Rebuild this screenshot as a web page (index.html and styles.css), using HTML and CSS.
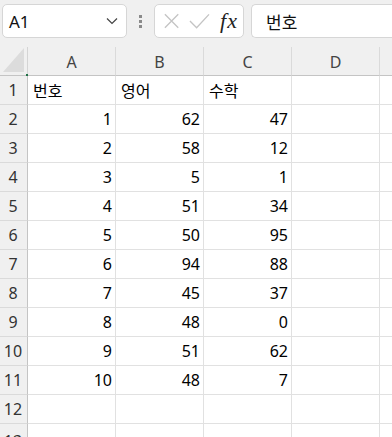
FILE: index.html
```html
<!DOCTYPE html>
<html lang="ko">
<head>
<meta charset="utf-8">
<link rel="stylesheet" href="styles.css">
</head>
<body>
<div class="app">
  <div class="toolbar">
    <div class="namebox">
      <span class="nb-text">A1</span>
      <svg class="chev" width="12" height="8" viewBox="0 0 12 8"><path d="M1 1.5 L6 6.5 L11 1.5" fill="none" stroke="#444" stroke-width="1.2"/></svg>
    </div>
    <div class="grip"><i></i><i></i><i></i></div>
    <div class="fxbox">
      <svg width="18" height="18" viewBox="0 0 18 18"><path d="M2 2 L16 16 M16 2 L2 16" stroke="#c4c4c4" stroke-width="1.4" fill="none"/></svg>
      <svg width="22" height="18" viewBox="0 0 22 18"><path d="M1 9 L8 16 L21 2" stroke="#c4c4c4" stroke-width="1.4" fill="none"/></svg>
      <span class="fx"><i>f</i><i class="x">x</i></span>
    </div>
    <div class="formula">번호</div>
  </div>
  <div class="sheet">
    <div class="ch corner"><span class="tri"></span><span class="dot"></span></div><div class="ch">A</div><div class="ch">B</div><div class="ch">C</div><div class="ch">D</div><div class="ch"></div>
    <div class="rh">1</div><div class="c">번호</div><div class="c">영어</div><div class="c">수학</div><div class="c"></div><div class="c"></div>
    <div class="rh">2</div><div class="c n">1</div><div class="c n">62</div><div class="c n">47</div><div class="c"></div><div class="c"></div>
    <div class="rh">3</div><div class="c n">2</div><div class="c n">58</div><div class="c n">12</div><div class="c"></div><div class="c"></div>
    <div class="rh">4</div><div class="c n">3</div><div class="c n">5</div><div class="c n">1</div><div class="c"></div><div class="c"></div>
    <div class="rh">5</div><div class="c n">4</div><div class="c n">51</div><div class="c n">34</div><div class="c"></div><div class="c"></div>
    <div class="rh">6</div><div class="c n">5</div><div class="c n">50</div><div class="c n">95</div><div class="c"></div><div class="c"></div>
    <div class="rh">7</div><div class="c n">6</div><div class="c n">94</div><div class="c n">88</div><div class="c"></div><div class="c"></div>
    <div class="rh">8</div><div class="c n">7</div><div class="c n">45</div><div class="c n">37</div><div class="c"></div><div class="c"></div>
    <div class="rh">9</div><div class="c n">8</div><div class="c n">48</div><div class="c n">0</div><div class="c"></div><div class="c"></div>
    <div class="rh">10</div><div class="c n">9</div><div class="c n">51</div><div class="c n">62</div><div class="c"></div><div class="c"></div>
    <div class="rh">11</div><div class="c n">10</div><div class="c n">48</div><div class="c n">7</div><div class="c"></div><div class="c"></div>
    <div class="rh">12</div><div class="c"></div><div class="c"></div><div class="c"></div><div class="c"></div><div class="c"></div>
    <div class="rh r13">13</div><div class="c"></div><div class="c"></div><div class="c"></div><div class="c"></div><div class="c"></div>
  </div>
</div>
</body>
</html>
```
FILE: styles.css
```css
html, body {
  margin: 0;
  padding: 0;
  background: #f0f0f0;
  overflow: hidden;
}
.app {
  width: 392px;
  height: 437px;
  overflow: hidden;
  font-family: "Noto Sans", "Noto Sans CJK KR", sans-serif;
}
.toolbar {
  display: flex;
  align-items: center;
  height: 47px;
  padding: 0 0 5px 2px;
  box-sizing: border-box;
}
.namebox {
  width: 125px;
  height: 34px;
  box-sizing: border-box;
  background: #fff;
  border: 1px solid #d6d6d6;
  border-radius: 5px;
  display: flex;
  align-items: center;
  justify-content: space-between;
  padding: 0 8px 0 6px;
}
.nb-text {
  font-size: 17px;
  color: #111;
}
.grip {
  width: 27px;
  display: flex;
  flex-direction: column;
  align-items: center;
  gap: 2px;
}
.grip i {
  width: 3px;
  height: 3px;
  background: #8a8a8a;
  display: block;
}
.fxbox {
  width: 90px;
  height: 34px;
  box-sizing: border-box;
  background: #fff;
  border: 1px solid #d6d6d6;
  border-radius: 5px;
  display: flex;
  align-items: center;
  padding: 0 6px 0 8px;
  gap: 9px;
}
.fx {
  font-family: "Liberation Serif", "DejaVu Serif", serif;
  font-size: 22px;
  color: #222;
  margin-left: 1px;
  line-height: 1;
}
.fx i { font-style: italic; }
.fx .x { margin-left: 1px; }
.formula {
  margin-left: 7px;
  flex: 1;
  height: 34px;
  box-sizing: border-box;
  background: #fff;
  border: 1px solid #d6d6d6;
  border-right: none;
  border-radius: 5px 0 0 5px;
  display: flex;
  align-items: center;
  padding-left: 14px;
  font-size: 17px;
  color: #111;
}
.sheet {
  display: grid;
  grid-template-columns: 28px 88px 88px 88px 88px 40px;
  grid-auto-rows: 29px;
  width: 420px;
  background: #fff;
}
.sheet > div {
  box-sizing: border-box;
  display: flex;
  align-items: center;
  font-size: 16px;
}
.ch {
  background: #f0f0f0;
  color: #444;
  justify-content: center;
  border-right: 1px solid #dadada;
  border-bottom: 1px solid #c4c4c4;
  padding-top: 1px;
}
.ch.corner {
  position: relative;
  border-right-color: #d4d4d4;
}
.tri {
  position: absolute;
  left: 3px;
  bottom: 3px;
  width: 0;
  height: 0;
  border-left: 21px solid transparent;
  border-bottom: 24px solid #dcdcdc;
}
.dot {
  position: absolute;
  right: -1px;
  bottom: -1px;
  width: 2px;
  height: 2px;
  background: #1e7145;
}
.rh {
  background: #f0f0f0;
  color: #333;
  justify-content: center;
  border-right: 1px solid #c4c4c4;
  border-bottom: 1px solid #dadada;
  padding-right: 1px;
}
.c {
  border-right: 1px solid #e1e1e1;
  border-bottom: 1px solid #e1e1e1;
  color: #000;
  padding: 0 5px;
  white-space: nowrap;
}
.c.n {
  justify-content: flex-end;
  padding-right: 3px;
}
.r13 {
  align-items: flex-start !important;
  padding-top: 6px;
  overflow: hidden;
}
```
